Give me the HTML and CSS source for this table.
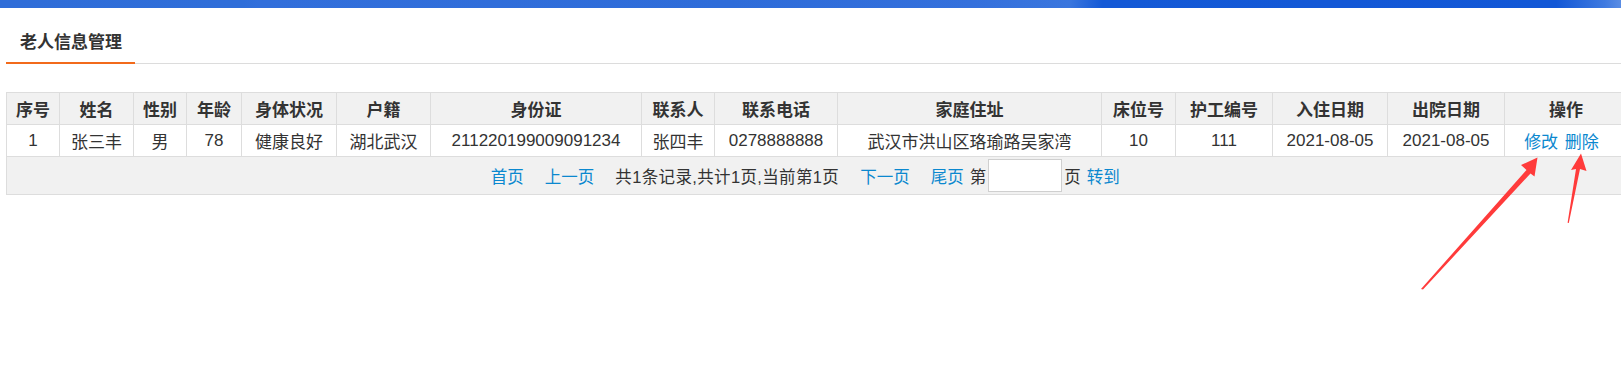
FILE: index.html
```html
<!DOCTYPE html>
<html lang="zh-CN">
<head>
<meta charset="utf-8">
<title>老人信息管理</title>
<link rel="stylesheet" href="styles.css">
</head>
<body>
<div class="topbar"></div>
<div class="titlebar"><span class="tab">老人信息管理</span></div>
<div class="wrap">
<table class="grid">
<colgroup>
<col style="width:53px"><col style="width:74px"><col style="width:53px"><col style="width:55px"><col style="width:95px"><col style="width:94px"><col style="width:211px"><col style="width:73px"><col style="width:123px"><col style="width:264px"><col style="width:74px"><col style="width:97px"><col style="width:115px"><col style="width:117px"><col style="width:123px">
</colgroup>
<thead>
<tr>
<th>序号</th><th>姓名</th><th>性别</th><th>年龄</th><th>身体状况</th><th>户籍</th><th>身份证</th><th>联系人</th><th>联系电话</th><th>家庭住址</th><th>床位号</th><th>护工编号</th><th>入住日期</th><th>出院日期</th><th>操作</th>
</tr>
</thead>
<tbody>
<tr>
<td>1</td><td>张三丰</td><td>男</td><td>78</td><td>健康良好</td><td>湖北武汉</td><td>211220199009091234</td><td>张四丰</td><td>0278888888</td><td>武汉市洪山区珞瑜路吴家湾</td><td>10</td><td>111</td><td>2021-08-05</td><td>2021-08-05</td><td class="ops"><a href="#">修改</a> <a href="#">删除</a></td>
</tr>
<tr class="pager-row">
<td colspan="15">
<div class="pager">
<a href="#" class="pl">首页</a>
<a href="#" class="pl">上一页</a>
<span class="info">共1条记录,共计1页,当前第1页</span>
<a href="#" class="pl">下一页</a>
<a href="#" class="pl last">尾页</a>
<span class="lbl">第</span><span class="box"></span><span class="lbl">页</span>
<a href="#" class="go">转到</a>
</div>
</td>
</tr>
</tbody>
</table>
</div>
<svg class="arrows" width="1621" height="371" viewBox="0 0 1621 371">
<polygon fill="#ff3b3b" points="1537.5,157.5 1521,165 1526.5,170 1421,289 1423,289.5 1530.5,173.5 1534.5,176.5"/>
<polygon fill="#ff3b3b" points="1581,153.5 1586.5,171 1580,169 1568.8,223 1567.6,222.8 1576,169 1571,170"/>
</svg>
</body>
</html>
```
FILE: styles.css
```css
html, body {
  margin: 0;
  padding: 0;
  overflow: hidden;
  background: #fff;
}
body {
  font-family: "Liberation Sans", "Noto Sans CJK SC", sans-serif;
  color: #333;
  position: relative;
  width: 1621px;
  height: 371px;
}
.topbar {
  height: 8px;
  background: linear-gradient(90deg, #2f6dd8 0%, #2f6ed9 15%, #326fdb 16%, #2e6cd9 45%, #3470dc 60%, #3a76de 66%, #1459d6 68%, #1257d6 96%, #3f7ae0 99%, #5a8de4 100%);
}
.titlebar {
  margin-left: 6px;
  border-bottom: 1px solid #dcdcdc;
}
.tab {
  display: inline-block;
  padding: 22px 13px 7px 14px;
  line-height: 25px;
  font-size: 17px;
  font-weight: bold;
  color: #333;
  border-bottom: 2px solid #f26a1b;
  margin-bottom: -1px;
  vertical-align: bottom;
}
.wrap {
  margin: 28px 0 0 6px;
  width: 1621px;
}
.grid {
  border-collapse: collapse;
  table-layout: fixed;
  width: 1621px;
  font-size: 17px;
}
.grid th, .grid td {
  border: 1px solid #dddddd;
  padding: 0;
  height: 31px;
  text-align: center;
  white-space: nowrap;
  overflow: hidden;
}
.grid th {
  background: #f1f1f1;
  font-weight: bold;
  color: #333;
}
.grid td {
  color: #333;
  background: #fff;
}
.grid a {
  color: #0b88cf;
  text-decoration: none;
}
.grid td.ops {
  padding-right: 9px;
}
.ops a + a {
  margin-left: 2px;
}
.grid .pager-row td {
  background: #f1f1f1;
  height: 37px;
  font-size: 16.5px;
}
.pager {
  display: flex;
  justify-content: center;
  align-items: center;
  padding-right: 34px;
}
.pl {
  margin: 0 10.5px;
}
.pl.last {
  margin-right: 6px;
}
.info {
  margin: 0 10.5px;
  color: #333;
  letter-spacing: 0.35px;
}
.lbl {
  color: #333;
}
.box {
  display: inline-block;
  width: 72px;
  height: 31px;
  border: 1px solid #cfcfcf;
  background: #fff;
  margin: 0 2px;
}
.go {
  margin-left: 6px;
}
.arrows {
  position: absolute;
  left: 0;
  top: 0;
  pointer-events: none;
}
```
